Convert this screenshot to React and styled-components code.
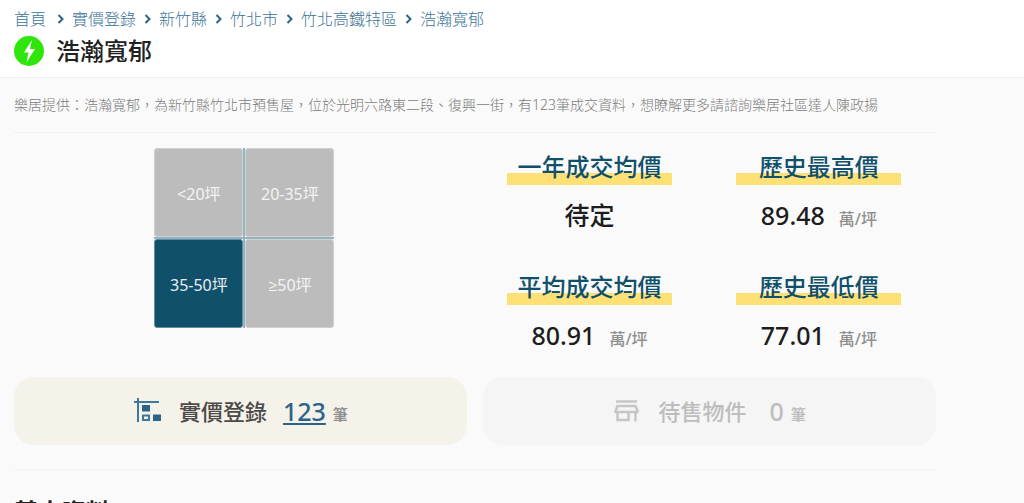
import { Fragment } from 'react';
// Styled Components
import styled, { createGlobalStyle } from 'styled-components';

const crumbs = ['首頁', '實價登錄', '新竹縣', '竹北市', '竹北高鐵特區', '浩瀚寬郁'];

const sizes = [
  { label: '<20坪', active: false },
  { label: '20-35坪', active: false },
  { label: '35-50坪', active: true },
  { label: '≥50坪', active: false },
];

const prices = [
  { label: '一年成交均價', value: '待定' },
  { label: '歷史最高價', value: '89.48', unit: '萬/坪' },
  { label: '平均成交均價', value: '80.91', unit: '萬/坪' },
  { label: '歷史最低價', value: '77.01', unit: '萬/坪' },
];

const BoltIcon = () => (
  <svg width='30' height='30' viewBox='0 0 30 30' aria-hidden='true'>
    <circle cx='15' cy='15' r='15' fill='#2fe60a' />
    <path d='M18 4L10 16.5h4.5L12.5 26.5L21 13H16z' fill='#fff' />
  </svg>
);

const ChevronIcon = () => (
  <svg width='7' height='10' viewBox='0 0 7 10' aria-hidden='true'>
    <path d='M1.5 1l4 4l-4 4' fill='none' stroke='#2c6489' strokeWidth='2' />
  </svg>
);

const RecordIcon = () => (
  <svg width='28' height='28' viewBox='0 0 28 28' fill='none' aria-hidden='true'>
    <path d='M1 5h25M5 1v24' stroke='#3e789b' strokeWidth='2' />
    <path d='M9 8h8v6.5H9zM20 17.5h8V24h-8z' fill='#2c6489' />
    <path d='M10 18.5h6V23h-6z' stroke='#3e789b' strokeWidth='2' />
  </svg>
);

const StoreIcon = () => (
  <svg width='28' height='28' viewBox='0 0 28 28' fill='none' aria-hidden='true'>
    <path
      d='M3 4.5h21M4.500 9h18l2 5v1h-22v-1zM4.500 15v8h11v-8M22.500 15v9.500'
      stroke='#c6c6c6'
      strokeWidth='2.500'
    />
  </svg>
);

const App = () => {
  return (
    <>
      <GlobalStyle />
      <StyledHeader>
        <StyledCrumbs aria-label='breadcrumb'>
          {crumbs.map((crumb, index) => (
            <Fragment key={crumb}>
              {index > 0 && <ChevronIcon />}
              <StyledCrumb href='#'>{crumb}</StyledCrumb>
            </Fragment>
          ))}
        </StyledCrumbs>
        <StyledTitle>
          <BoltIcon />
          <h1>浩瀚寬郁</h1>
        </StyledTitle>
      </StyledHeader>
      <StyledMain>
        <StyledIntro>
          樂居提供：浩瀚寬郁，為新竹縣竹北市預售屋，位於光明六路東二段、復興一街，有123筆成交資料，想瞭解更多請諮詢樂居社區達人陳政揚
        </StyledIntro>
        <StyledSummary>
          <StyledSizeMap>
            {sizes.map((size) => (
              <StyledSize
                key={size.label}
                type='button'
                aria-pressed={size.active}
                $active={size.active}
              >
                {size.label}
              </StyledSize>
            ))}
          </StyledSizeMap>
          <StyledPrices>
            {prices.map((price) => (
              <StyledPrice key={price.label}>
                <dt>{price.label}</dt>
                <dd>
                  {price.value}
                  {price.unit && <StyledUnit>{price.unit}</StyledUnit>}
                </dd>
              </StyledPrice>
            ))}
          </StyledPrices>
        </StyledSummary>
        <StyledActions>
          <StyledAction type='button'>
            <RecordIcon />
            <StyledActionLabel>實價登錄</StyledActionLabel>
            <StyledCount>123</StyledCount>
            <small>筆</small>
          </StyledAction>
          <StyledAction type='button' disabled>
            <StoreIcon />
            <StyledActionLabel>待售物件</StyledActionLabel>
            <StyledCount>0</StyledCount>
            <small>筆</small>
          </StyledAction>
        </StyledActions>
        <StyledSection>
          <h2>基本資料</h2>
        </StyledSection>
      </StyledMain>
    </>
  );
};

const GlobalStyle = createGlobalStyle`
  * {
    box-sizing: border-box;
    margin: 0;
    padding: 0;
  }

  body {
    background: #fafafa;
    color: #222;
    font-family: 'Noto Sans', 'Open Sans', 'Noto Sans CJK TC', sans-serif;
  }

  button {
    border: none;
    font-family: inherit;
  }

  svg {
    flex-shrink: 0;
  }
`;

const StyledHeader = styled.header`
  padding: 8px 14px 10px;
  background: #fff;
  border-bottom: 1px solid #f0f0f0;
`;

const StyledCrumbs = styled.nav`
  display: flex;
  align-items: center;
  gap: 8px;
`;

const StyledCrumb = styled.a`
  color: #3c7296;
  font-size: 16px;
  font-weight: 300;
  line-height: 22px;
  text-decoration: none;

  &:first-child {
    margin-right: 3px;
  }
`;

const StyledTitle = styled.div`
  display: flex;
  align-items: center;
  gap: 12px;
  padding-top: 5px;

  h1 {
    font-size: 24px;
    font-weight: 500;
    line-height: 32px;
  }
`;

const StyledMain = styled.main`
  width: 90%;
  margin-left: 14px;
`;

const StyledIntro = styled.p`
  padding: 17px 0;
  border-bottom: 1px solid #f0f0f0;
  color: #7c7c7c;
  font-size: 14px;
  font-weight: 300;
  line-height: 20px;
`;

const StyledSummary = styled.section`
  display: grid;
  grid-template-columns: 1fr 1fr;
  padding: 15px 0 24px;
`;

const StyledSizeMap = styled.div`
  display: grid;
  grid-template-columns: 89px 89px;
  grid-auto-rows: 89px;
  gap: 2px;
  place-self: start center;
  background: linear-gradient(#94b4c3, #94b4c3) center / 2px 100% no-repeat,
    linear-gradient(#94b4c3, #94b4c3) center / 100% 2px no-repeat;
`;

const StyledSize = styled.button`
  border: 1px solid ${({ $active }) => ($active ? '#5f8fa3' : '#d0d0d0')};
  border-radius: 3px;
  background: ${({ $active }) => ($active ? '#10506b' : '#bcbcbc')};
  color: ${({ $active }) => ($active ? '#e8eef1' : '#f4f4f4')};
  font-size: 16px;
`;

const StyledPrices = styled.dl`
  display: grid;
  grid-template-columns: 1fr 1fr;
  row-gap: 35px;
  padding-right: 2px;
`;

const StyledPrice = styled.div`
  display: flex;
  flex-direction: column;
  align-items: center;
  gap: 12px;

  dt {
    width: 72%;
    padding-top: 1px;
    background: linear-gradient(#ffe074, #ffe074) bottom / 100% 12px no-repeat;
    color: #10506b;
    font-size: 24px;
    font-weight: 500;
    line-height: 36px;
    text-align: center;
    white-space: nowrap;
  }

  dd {
    color: #1d1d1d;
    font-size: 25px;
    font-weight: 500;
    line-height: 36px;
  }
`;

const StyledUnit = styled.span`
  margin-left: 14px;
  color: #8f8f8f;
  font-size: 16px;
  line-height: 16px;
`;

const StyledActions = styled.div`
  display: grid;
  grid-template-columns: 1fr 1fr;
  gap: 16px;
  padding-bottom: 24px;
  border-bottom: 1px solid #f2f2f2;
`;

const StyledCount = styled.span`
  margin-left: 16px;
  color: #2c6489;
  font-size: 25px;
  font-weight: 500;
  text-decoration: underline;
  text-decoration-thickness: 2px;
  text-underline-offset: 2px;
`;

const StyledAction = styled.button`
  display: flex;
  justify-content: center;
  align-items: center;
  height: 68px;
  border-radius: 20px;
  background: #f5f2e9;
  color: #4c4a48;
  cursor: pointer;

  small {
    margin: 4px 0 0 7px;
    color: #8f8f8f;
    font-size: 15px;
    font-weight: 700;
  }

  &:disabled {
    background: #f5f5f5;
    color: #bdbdbd;
    cursor: default;
  }

  &:disabled small {
    color: #bdbdbd;
  }

  &:disabled ${StyledCount} {
    margin-left: 23px;
    color: #bdbdbd;
    text-decoration: none;
  }
`;

const StyledActionLabel = styled.span`
  margin-left: 18px;
  padding-bottom: 3px;
  font-size: 22px;
  font-weight: 500;
`;

const StyledSection = styled.section`
  padding-top: 24px;

  h2 {
    font-size: 24px;
    font-weight: 700;
    line-height: 36px;
  }
`;

export default App;
